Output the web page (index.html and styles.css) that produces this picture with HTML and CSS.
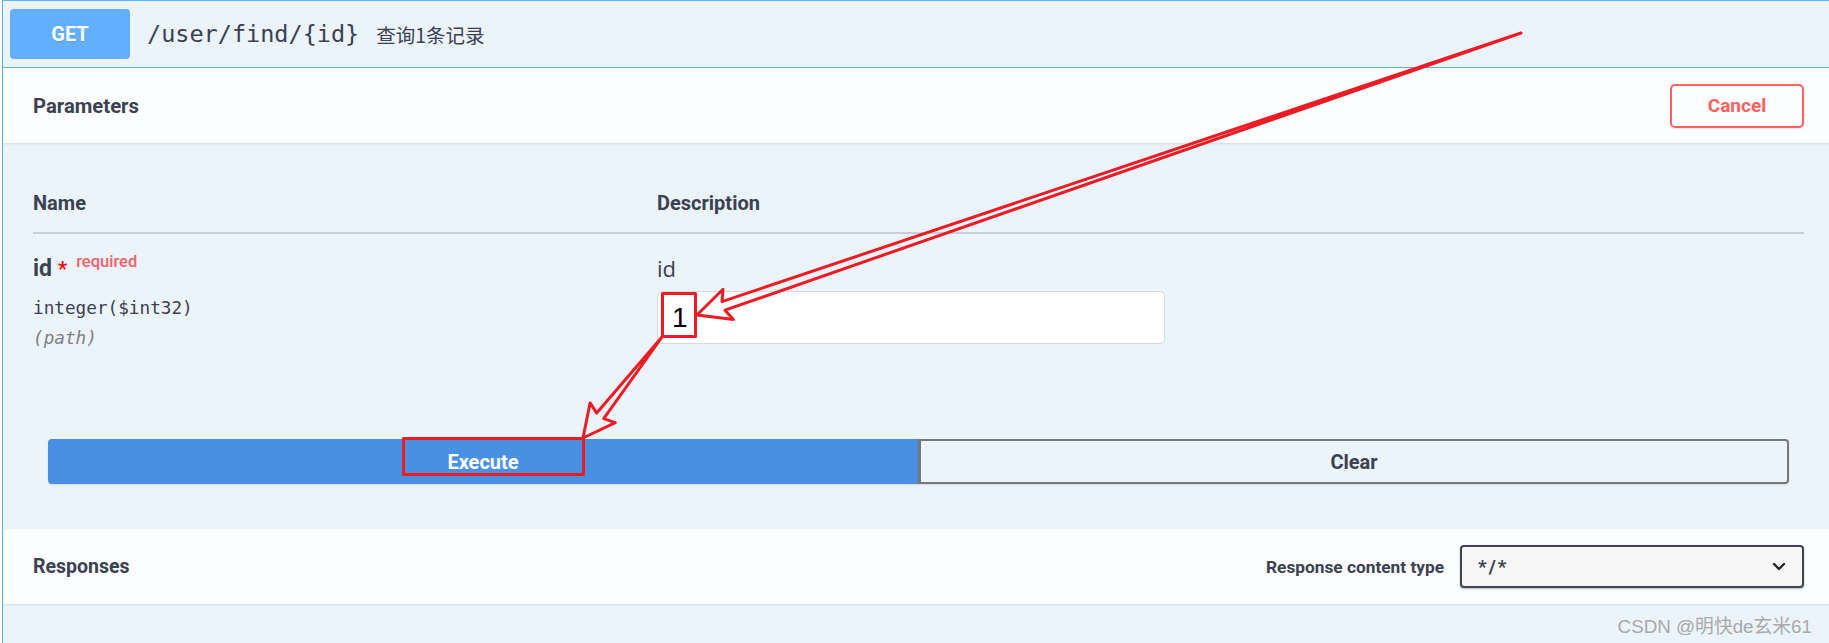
FILE: index.html
```html
<!DOCTYPE html>
<html lang="zh">
<head>
    <meta charset="UTF-8">
    <meta name="viewport" content="width=device-width, initial-scale=1.0">
    <title>Swagger UI - /user/find/{id}</title>
    <link rel="stylesheet" href="styles.css">
</head>
<body>
    <div class="opblock">
        <div class="summary">
            <span class="method">GET</span>
            <span class="path">/user/find/{id}</span>
            <span class="summary-desc">查询1条记录</span>
        </div>

        <div class="section-header">
            <h4 class="params-title">Parameters</h4>
            <button class="btn-cancel">Cancel</button>
        </div>

        <div class="params">
            <div class="params-head">
                <div>Name</div>
                <div>Description</div>
            </div>
            <div class="param-row">
                <div>
                    <div class="param-name">id<span class="star">*</span><span class="required">required</span></div>
                    <div class="param-type">integer($int32)</div>
                    <div class="param-in">(path)</div>
                </div>
                <div>
                    <div class="param-desc">id</div>
                    <input class="param-input" type="text" value="1">
                </div>
            </div>
        </div>

        <div class="execute-wrapper">
            <button class="btn-execute">Execute</button>
            <button class="btn-clear">Clear</button>
        </div>

        <div class="section-header">
            <h4>Responses</h4>
            <div class="content-type">
                <label>Response content type</label>
                <div class="select">
                    <span>*/*</span>
                    <svg width="14" height="10" viewBox="0 0 14 10">
                        <path d="M2 2 L7 7 L12 2" fill="none" stroke="#222" stroke-width="2.4" stroke-linecap="round" stroke-linejoin="round"/>
                    </svg>
                </div>
            </div>
        </div>
        <div class="block-rest"></div>
    </div>

    <div class="watermark">CSDN @明快de玄米61</div>

    <!-- red marks drawn on top of the screenshot -->
    <svg class="marks" width="1829" height="643" viewBox="0 0 1829 643">
        <g fill="none" stroke="#ed1c24" stroke-width="3" stroke-linejoin="round" stroke-linecap="round">
            <rect x="662.5" y="293.5" width="33" height="43"/>
            <rect x="403.5" y="438.5" width="180" height="36"/>
            <polygon points="1521,33 722,301.6 723,289.2 697,315 733.4,319.4 725,310.2"/>
            <polygon points="662,337 596.7,413.1 590.1,402.9 583,438 615.3,422.7 603.7,418.7"/>
        </g>
    </svg>
</body>
</html>
```

FILE: styles.css
```css
html, body {
    margin: 0;
    overflow: hidden;
}

body {
    position: relative;
    width: 1829px;
    height: 643px;
    background: #fff;
    font-family: Roboto, "Noto Sans", sans-serif;
    color: #3b4151;
}

.opblock {
    margin: 0 -6px 0 2px;
    border: 1px solid #61affe;
    background: #ebf3fb;
}

.summary {
    display: flex;
    align-items: center;
    height: 50px;
    padding: 8px 7px;
    border-bottom: 1px solid #61affe;
}

.method {
    width: 120px;
    height: 50px;
    line-height: 50px;
    margin-right: 17px;
    border-radius: 4px;
    background: #61affe;
    color: #fff;
    font-size: 20px;
    font-weight: 700;
    text-align: center;
    text-shadow: 0 1px 0 rgba(0, 0, 0, 0.1);
}

.path {
    margin-right: 17px;
    font-family: "DejaVu Sans Mono", monospace;
    font-size: 23.5px;
}

.summary-desc {
    font-family: "Noto Sans CJK SC", sans-serif;
    font-size: 19.5px;
}

.section-header {
    display: flex;
    align-items: center;
    justify-content: space-between;
    height: 75px;
    padding: 0 30px;
    background: rgba(255, 255, 255, 0.8);
    box-shadow: 0 1px 2px rgba(0, 0, 0, 0.1);
}

.section-header h4 {
    margin: 0;
    font-size: 19.5px;
    font-weight: 700;
}

.section-header .params-title {
    font-size: 20.3px;
}

.btn-cancel {
    width: 134px;
    height: 44px;
    border: 2px solid #ff6060;
    border-radius: 5px;
    background: transparent;
    color: #ff6060;
    font-family: Roboto, sans-serif;
    font-size: 19px;
    font-weight: 700;
    box-shadow: 0 1px 2px rgba(0, 0, 0, 0.1);
}

.params {
    padding: 48px 30px 0;
}

.params-head,
.param-row {
    display: grid;
    grid-template-columns: 624px 1fr;
}

.params-head {
    padding-bottom: 17px;
    border-bottom: 2px solid rgba(59, 65, 81, 0.2);
    font-size: 20px;
    font-weight: 700;
    line-height: 24px;
}

.param-row {
    padding-top: 20px;
}

.param-name {
    font-size: 23px;
    font-weight: 700;
    line-height: 30px;
}

.star {
    margin-left: 6px;
    color: red;
    font-size: 20px;
}

.required {
    position: relative;
    top: -9px;
    margin-left: 9px;
    color: #f76164;
    font-size: 16.5px;
    font-weight: 500;
}

.param-type,
.param-in {
    font-family: "DejaVu Sans Mono", monospace;
    font-size: 17.7px;
    line-height: 30px;
}

.param-type {
    margin-top: 7px;
}

.param-in {
    color: #808080;
    font-style: italic;
}

.param-desc {
    font-family: "Open Sans", sans-serif;
    font-size: 22px;
    line-height: 28px;
}

.param-input {
    box-sizing: border-box;
    display: block;
    width: 508px;
    height: 53px;
    margin-top: 9px;
    padding: 0 14px;
    border: 1px solid #d9d9d9;
    border-radius: 5px;
    background: #fff;
    color: #000;
    font-family: "Liberation Sans", Arial, sans-serif;
    font-size: 28px;
    outline: none;
}

.execute-wrapper {
    display: flex;
    padding: 86px 45px 45px;
}

.btn-execute,
.btn-clear {
    flex: 1;
    height: 45px;
    font-family: Roboto, sans-serif;
    font-size: 20px;
    font-weight: 700;
    box-shadow: 0 1px 2px rgba(0, 0, 0, 0.1);
}

.btn-execute {
    border: 2px solid #4990e2;
    border-radius: 4px 0 0 4px;
    background: #4990e2;
    color: #fff;
}

.btn-clear {
    border: 2px solid #777;
    border-left-width: 3px;
    border-radius: 0 4px 4px 0;
    background: transparent;
    color: #3b4151;
}

.content-type {
    display: flex;
    align-items: center;
}

.content-type label {
    margin-right: 16px;
    font-size: 17.3px;
    font-weight: 700;
}

.select {
    box-sizing: border-box;
    display: flex;
    align-items: center;
    justify-content: space-between;
    width: 344px;
    height: 43px;
    padding: 0 16px 0 16px;
    border: 2px solid #41444e;
    border-radius: 4px;
    background: #f7f7f7;
    box-shadow: 0 1px 2px rgba(0, 0, 0, 0.25);
    font-size: 19px;
    font-weight: 700;
    letter-spacing: 2px;
}

.block-rest {
    height: 60px;
}

.watermark {
    position: absolute;
    right: 17px;
    top: 611px;
    color: #a9a9a9;
    font-family: "Liberation Sans", "Noto Sans CJK SC", sans-serif;
    font-size: 18.8px;
}

.marks {
    position: absolute;
    top: 0;
    left: 0;
    pointer-events: none;
}
```
